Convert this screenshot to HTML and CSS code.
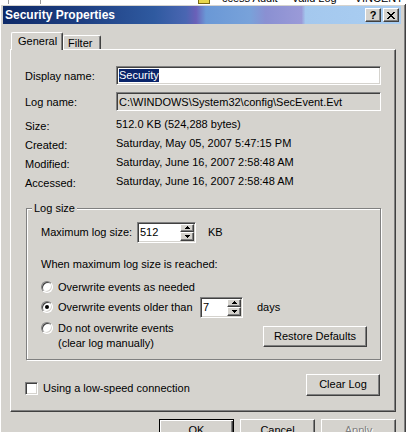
FILE: index.html
```html
<!DOCTYPE html>
<html>
<head>
<meta charset="utf-8">
<title>Security Properties</title>
<link rel="stylesheet" href="styles.css">
</head>
<body>
<div class="bgstrip">
  <div class="bgrow">
    <span class="bg-tick t1"></span>
    <span class="bg-tick t2"></span>
    <span class="bg-icon"></span>
    <span class="bg-text b1">ccess Audit</span>
    <span class="bg-text b2">Valid Log</span>
    <span class="bg-text b3">VINCENT</span>
  </div>
</div>
<div class="dialog">
  <div class="titlebar">
    <span class="title">Security Properties</span>
    <div class="tbtns">
      <span class="tbtn help">?</span>
      <span class="tbtn">
        <svg width="8" height="7" viewBox="0 0 8 7" shape-rendering="crispEdges"><path d="M0 0h2v1H0zM6 0h2v1H6zM1 1h2v1H1zM5 1h2v1H5zM2 2h4v1H2zM3 3h2v1H3zM2 4h4v1H2zM1 5h2v1H1zM5 5h2v1H5zM0 6h2v1H0zM6 6h2v1H6z" fill="#000"/></svg>
      </span>
    </div>
  </div>
  <div class="tabs">
    <div class="tab tab-active">General</div>
    <div class="tab tab-filter">Filter</div>
  </div>
  <div class="panel">
    <div class="field">
      <span class="field-label">Display name:</span>
      <div class="edit"><span class="sel">Security</span></div>
    </div>
    <div class="field">
      <span class="field-label">Log name:</span>
      <div class="edit edit-disabled">C:\WINDOWS\System32\config\SecEvent.Evt</div>
    </div>
    <div class="info">
      <div class="info-labels">
        <div>Size:</div>
        <div>Created:</div>
        <div>Modified:</div>
        <div>Accessed:</div>
      </div>
      <div class="info-values">
        <div>512.0 KB (524,288 bytes)</div>
        <div>Saturday, May 05, 2007 5:47:15 PM</div>
        <div>Saturday, June 16, 2007 2:58:48 AM</div>
        <div>Saturday, June 16, 2007 2:58:48 AM</div>
      </div>
    </div>
    <div class="group">
      <span class="legend">Log size</span>
      <div class="grow row-max">
        <span class="lbl-max">Maximum log size:</span>
        <div class="spin spin-max">
          <span class="spin-text">512</span>
          <div class="spin-btns">
            <span class="spin-btn"><svg width="5" height="3" viewBox="0 0 5 3" shape-rendering="crispEdges"><path d="M2 0h1v1H2zM1 1h3v1H1zM0 2h5v1H0z" fill="#000"/></svg></span>
            <span class="spin-btn"><svg width="5" height="3" viewBox="0 0 5 3" shape-rendering="crispEdges"><path d="M0 0h5v1H0zM1 1h3v1H1zM2 2h1v1H2z" fill="#000"/></svg></span>
          </div>
        </div>
        <span class="unit-kb">KB</span>
      </div>
      <div class="when">When maximum log size is reached:</div>
      <div class="radio-row r1">
        <span class="radio"></span>
        <span>Overwrite events as needed</span>
      </div>
      <div class="radio-row r2">
        <span class="radio radio-on"></span>
        <span class="r2-text">Overwrite events older than</span>
        <div class="spin spin-days">
          <span class="spin-text">7</span>
          <div class="spin-btns">
            <span class="spin-btn"><svg width="5" height="3" viewBox="0 0 5 3" shape-rendering="crispEdges"><path d="M2 0h1v1H2zM1 1h3v1H1zM0 2h5v1H0z" fill="#000"/></svg></span>
            <span class="spin-btn"><svg width="5" height="3" viewBox="0 0 5 3" shape-rendering="crispEdges"><path d="M0 0h5v1H0zM1 1h3v1H1zM2 2h1v1H2z" fill="#000"/></svg></span>
          </div>
        </div>
        <span class="days">days</span>
      </div>
      <div class="radio-row r3">
        <div class="r3-left">
          <span class="radio r3-radio"></span>
          <span class="r3-text">Do not overwrite events<br>(clear log manually)</span>
        </div>
        <div class="btn restore">Restore Defaults</div>
      </div>
    </div>
    <div class="bottom">
      <div class="chk-wrap">
        <span class="checkbox"></span>
        <span>Using a low-speed connection</span>
      </div>
      <div class="btn clear">Clear Log</div>
    </div>
  </div>
  <div class="actions">
    <div class="btn btn-default">OK</div>
    <div class="btn">Cancel</div>
    <div class="btn btn-disabled">Apply</div>
  </div>
</div>
</body>
</html>
```

FILE: styles.css
```css
* { box-sizing: border-box; }
html, body { margin: 0; }
body {
  width: 409px;
  height: 432px;
  overflow: hidden;
  background: #fff;
  font-family: "Liberation Sans", Arial, sans-serif;
  font-size: 11px;
  color: #000;
}

/* buttons (base) */
.btn {
  width: 75px;
  height: 23px;
  flex: none;
  background: #d5d3ce;
  border: 1px solid;
  border-color: #fff #404040 #404040 #fff;
  box-shadow: inset -1px -1px 0 #808080;
  display: flex;
  align-items: center;
  justify-content: center;
  line-height: 13px;
  white-space: nowrap;
}
.btn-default {
  border-color: #000;
  box-shadow: inset 1px 1px 0 #fff, inset -1px -1px 0 #404040, inset -2px -2px 0 #808080;
}
.btn-disabled { color: #808080; text-shadow: 1px 1px 0 #fff; }

/* window behind */
.bgstrip { height: 4px; overflow: hidden; background: #fff; }
.bgrow {
  display: flex;
  align-items: flex-end;
  height: 12px;
  margin-top: -8px;
  line-height: 12px;
  white-space: nowrap;
}
.bg-tick { width: 1px; height: 12px; background: #9a9a9a; }
.t1 { margin-left: 8px; }
.t2 { margin-left: 31px; }
.bg-icon { width: 12px; height: 10px; margin-left: 157px; background: #e8d84a; border: 1px solid #7a6a10; }
.bg-text { color: #000; }
.b1 { margin-left: 12px; }
.b2 { margin-left: 14px; }
.b3 { margin-left: 18px; }

/* dialog frame */
.dialog {
  width: 406px;
  height: 428px;
  background: #d5d3ce;
  padding: 2px 4px 0 3px;
  border-right: 1px solid #404040;
  box-shadow: inset 1px 1px 0 #fff, inset -1px 0 0 #808080;
}
.titlebar {
  height: 18px;
  display: flex;
  align-items: center;
  justify-content: space-between;
  padding: 0 2px;
  background: linear-gradient(90deg,
    #0e2a68 0%, #1e3f82 20%, #2f5aa0 38%, #4a66b2 46%, #6a60b8 48.5%,
    #6a98d6 51%, #78a2da 62%, #8a90d2 66%, #9a9ad8 75%, #a4c8ee 76%, #aacef2 100%);
}
.title { color: #fff; font-weight: bold; font-size: 12px; line-height: 14px; }
.tbtns { display: flex; gap: 2px; }
.tbtn {
  width: 16px;
  height: 14px;
  background: #d5d3ce;
  border: 1px solid;
  border-color: #fff #404040 #404040 #fff;
  box-shadow: inset -1px -1px 0 #808080;
  display: flex;
  align-items: center;
  justify-content: center;
}
.help { font-weight: bold; font-size: 11px; line-height: 11px; }

/* tabs */
.tabs { height: 25px; display: flex; align-items: flex-end; padding-left: 8px; }
.tab {
  height: 14px;
  border: 1px solid;
  border-bottom: 0;
  border-color: #fff #404040 #404040 #fff;
  box-shadow: inset -1px 0 0 #808080;
  border-radius: 2px 2px 0 0;
  display: flex;
  align-items: center;
  background: #d5d3ce;
}
.tab-active {
  width: 52px;
  height: 18px;
  margin-bottom: -1px;
  position: relative;
  z-index: 1;
  padding-left: 6px;
  padding-bottom: 1px;
}
.tab-filter { width: 38px; padding-left: 4px; padding-top: 1px; }

/* panel */
.panel {
  margin-left: 7px;
  width: 386px;
  height: 363px;
  border: 1px solid;
  border-color: #fff #404040 #404040 #fff;
  box-shadow: inset -1px -1px 0 #808080;
  padding: 16px 14px 0 14px;
}
.field { display: flex; align-items: center; height: 19px; }
.field + .field { margin-top: 7px; }
.field-label { width: 91px; flex: none; }
.edit {
  flex: 1;
  height: 19px;
  background: #fff;
  border: 1px solid;
  border-color: #808080 #fff #fff #808080;
  box-shadow: inset 1px 1px 0 #404040, inset -1px -1px 0 #d5d3ce;
  padding: 0 2px;
  display: flex;
  align-items: center;
  white-space: nowrap;
}
.edit-disabled { background: #d5d3ce; padding-left: 2px; }
.sel { background: #0a246a; color: #fff; line-height: 13px; }

.info { display: flex; margin-top: 4px; }
.info-labels { width: 91px; padding-top: 1.5px; line-height: 19.3px; }
.info-values { line-height: 18.9px; }

/* group box */
.group {
  position: relative;
  margin: 14px 0 0 1px;
  border: 1px solid #808080;
  box-shadow: inset 1px 1px 0 #fff, 1px 1px 0 #fff;
  padding: 13px 13px 8px 14px;
}
.legend {
  position: absolute;
  top: -7px;
  left: 5px;
  padding: 0 2px;
  background: #d5d3ce;
  line-height: 13px;
}
.grow { display: flex; align-items: center; }
.row-max { height: 21px; }
.lbl-max { width: 96px; flex: none; }
.spin {
  display: flex;
  height: 21px;
  flex: none;
  background: #fff;
  border: 1px solid;
  border-color: #808080 #fff #fff #808080;
  box-shadow: inset 1px 1px 0 #404040, inset -1px -1px 0 #d5d3ce;
  padding: 1px;
}
.spin-max { width: 59px; }
.spin-days { width: 43px; }
.spin-text { flex: 1; padding-left: 1px; line-height: 17px; }
.spin-btns { width: 14px; display: flex; flex-direction: column; }
.spin-btn {
  flex: 1;
  background: #d5d3ce;
  border: 1px solid;
  border-color: #fff #404040 #404040 #fff;
  box-shadow: inset -1px -1px 0 #808080;
  display: flex;
  align-items: center;
  justify-content: center;
}
.spin-btn svg { display: block; }
.unit-kb { margin-left: 12px; }
.when { margin-top: 11px; height: 20px; display: flex; align-items: center; }
.radio-row { display: flex; align-items: center; height: 20px; }
.r1 { margin-top: 3px; }
.r2 { height: 21px; }
.r3 { margin-top: 3px; height: 30px; align-items: flex-start; justify-content: space-between; }
.radio {
  position: relative;
  width: 12px;
  height: 12px;
  flex: none;
  margin-right: 5px;
  border-radius: 50%;
  background: #fff;
  border: 1px solid;
  border-color: #808080 #fff #fff #808080;
  box-shadow: inset 1px 1px 0 #404040, inset -1px -1px 0 #d5d3ce;
}
.radio-on::after {
  content: "";
  position: absolute;
  left: 3px;
  top: 3px;
  width: 4px;
  height: 4px;
  border-radius: 50%;
  background: #000;
}
.r2-text { width: 142px; flex: none; }
.days { margin-left: 14px; }
.r3-left { display: flex; align-items: flex-start; }
.r3-radio { margin-top: 1.5px; }
.r3-text { line-height: 15px; }
.btn.restore { margin-top: 5px; width: 104px; height: 21px; }

.bottom { display: flex; justify-content: space-between; align-items: flex-start; margin-top: 14px; }
.chk-wrap { display: flex; align-items: center; margin-top: 8px; line-height: 13px; }
.checkbox {
  width: 13px;
  height: 13px;
  margin-right: 5px;
  background: #fff;
  border: 1px solid;
  border-color: #808080 #fff #fff #808080;
  box-shadow: inset 1px 1px 0 #404040, inset -1px -1px 0 #d5d3ce;
}
.btn.clear { width: 74px; height: 22px; margin-right: 1px; }

.actions { display: flex; justify-content: flex-end; gap: 6px; margin-top: 7px; padding-right: 5px; }
```
